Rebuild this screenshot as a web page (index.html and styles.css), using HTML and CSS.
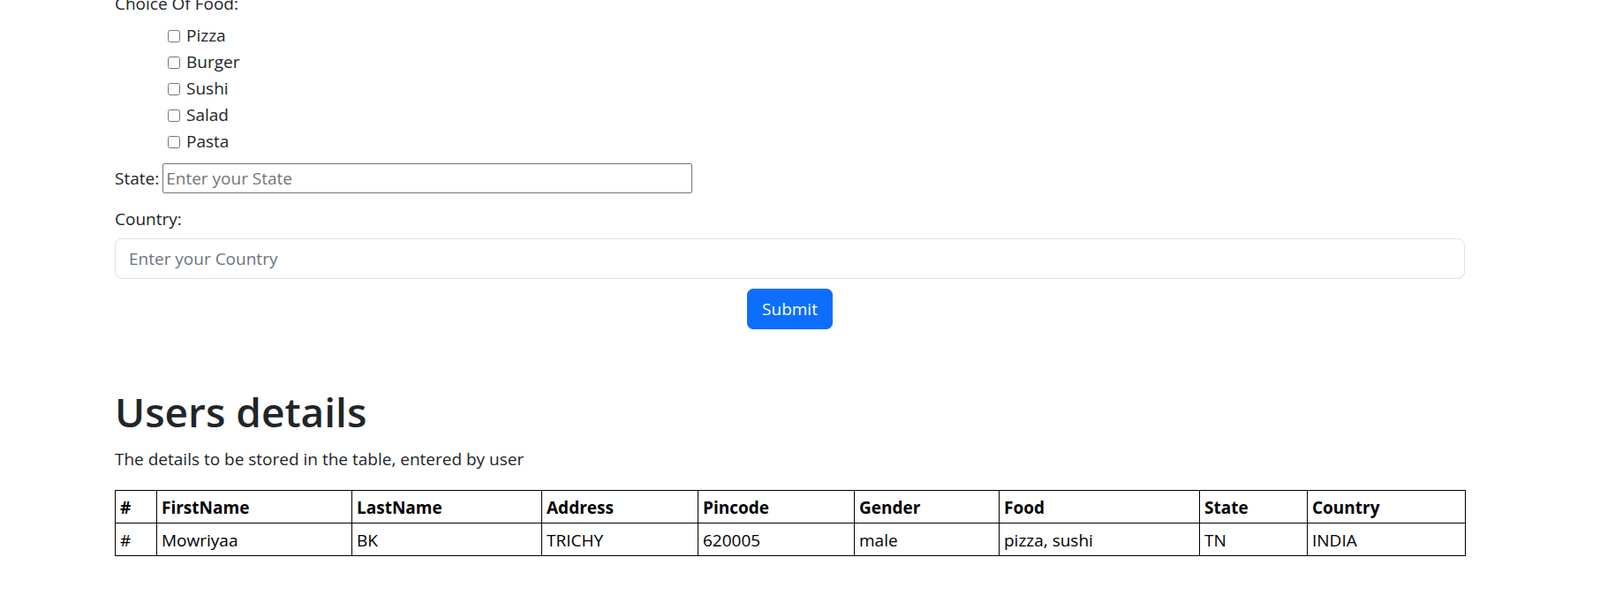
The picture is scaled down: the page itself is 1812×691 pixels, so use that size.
FILE: index.html
```html
<!DOCTYPE html>
<html lang="en">
<head>
<meta charset="utf-8">
<title>Users details</title>
<link rel="stylesheet" href="styles.css">
</head>
<body>
<div class="container">
  <form class="user-form">
    <div class="field-label">Choice Of Food:</div>
    <div class="food-list">
      <label class="food-item"><input type="checkbox" class="food-check"><span>Pizza</span></label>
      <label class="food-item"><input type="checkbox" class="food-check"><span>Burger</span></label>
      <label class="food-item"><input type="checkbox" class="food-check"><span>Sushi</span></label>
      <label class="food-item"><input type="checkbox" class="food-check"><span>Salad</span></label>
      <label class="food-item"><input type="checkbox" class="food-check"><span>Pasta</span></label>
    </div>
    <div class="state-row">
      <label class="state-label" for="state">State:</label>
      <input id="state" class="state-input" type="text" placeholder="Enter your State">
    </div>
    <div class="field-label country-label">Country:</div>
    <input class="country-input" type="text" placeholder="Enter your Country">
    <div class="submit-row">
      <button type="button" class="btn-submit">Submit</button>
    </div>
  </form>

  <h1 class="title">Users details</h1>
  <p class="subtitle">The details to be stored in the table, entered by user</p>

  <table class="users-table">
    <thead>
      <tr>
        <th class="col-num">#</th>
        <th class="col-first">FirstName</th>
        <th class="col-last">LastName</th>
        <th class="col-address">Address</th>
        <th class="col-pin">Pincode</th>
        <th class="col-gender">Gender</th>
        <th class="col-food">Food</th>
        <th class="col-state">State</th>
        <th class="col-country">Country</th>
      </tr>
    </thead>
    <tbody>
      <tr>
        <td>#</td>
        <td>Mowriyaa</td>
        <td>BK</td>
        <td>TRICHY</td>
        <td>620005</td>
        <td>male</td>
        <td>pizza, sushi</td>
        <td>TN</td>
        <td>INDIA</td>
      </tr>
    </tbody>
  </table>
</div>
</body>
</html>
```

FILE: styles.css
```css
* {
  box-sizing: border-box;
}

html, body {
  background: #fff;
}

body {
  margin: 0;
  font-family: "Open Sans", "Noto Sans", sans-serif;
  font-size: 19px;
  line-height: 30px;
  color: #212529;
}

.container {
  width: 1529px;
  margin-left: 130px;
  margin-top: -11px;
}

.field-label {
  height: 30px;
}

.food-list {
  margin-top: 6px;
  padding-left: 60px;
}

.food-item {
  display: flex;
  align-items: center;
  height: 30px;
}

.food-check {
  width: 14px;
  height: 14px;
  margin: 1px 7px 0 0;
}

.state-row {
  margin-top: 10px;
  display: flex;
  align-items: baseline;
  gap: 4px;
}

.state-input {
  width: 600px;
  height: 34px;
  padding: 1px 3px;
  font: inherit;
  line-height: 30px;
  color: #212529;
  border: 1px solid #767676;
  border-radius: 2px;
}

.state-input::placeholder {
  color: #757575;
}

.country-label {
  margin-top: 14px;
}

.country-input {
  display: block;
  width: 100%;
  height: 46px;
  margin-top: 7px;
  padding: 7px 15px;
  font: inherit;
  line-height: 30px;
  color: #212529;
  border: 1px solid #dee2e6;
  border-radius: 8px;
}

.country-input::placeholder {
  color: #6c757d;
}

.submit-row {
  margin-top: 11px;
  text-align: center;
}

.btn-submit {
  height: 46px;
  padding: 7px 16px;
  font: inherit;
  line-height: 30px;
  color: #fff;
  background: #0d6efd;
  border: 1px solid #0d6efd;
  border-radius: 7px;
}

.title {
  margin: 63px 0 9px;
  font-size: 46px;
  line-height: 60px;
  font-weight: 600;
  color: #212529;
}

.subtitle {
  margin: 0 0 20px;
}

.users-table {
  width: 100%;
  border-collapse: collapse;
  table-layout: fixed;
  color: #000;
}

.users-table th,
.users-table td {
  border: 1px solid #000;
  padding: 4px 5px 2px;
  text-align: left;
  line-height: 30px;
}

.users-table th {
  font-weight: 700;
}

.col-num { width: 47px; }
.col-first { width: 221px; }
.col-last { width: 215px; }
.col-address { width: 177px; }
.col-pin { width: 177px; }
.col-gender { width: 164px; }
.col-food { width: 227px; }
.col-state { width: 122px; }
.col-country { width: 179px; }
```
